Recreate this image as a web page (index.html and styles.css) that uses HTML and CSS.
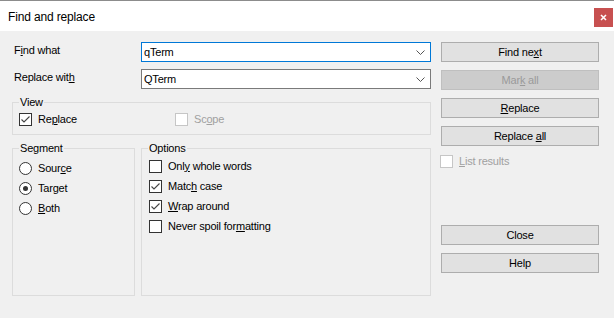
FILE: index.html
```html
<!DOCTYPE html>
<html>
<head>
<meta charset="utf-8">
<link rel="stylesheet" href="styles.css">
</head>
<body>
<div class="window">
  <div class="titlebar">
    <span class="title">Find and replace</span>
    <span class="close-x"><svg width="7" height="7" viewBox="0 0 7 7"><path d="M1 1 L6 6 M6 1 L1 6" stroke="#fff" stroke-width="1.6"/></svg></span>
  </div>
  <div class="main">
    <div class="left">
      <div class="field-row">
        <span class="flabel">F<u>i</u>nd what</span>
        <div class="combo focused"><span class="combo-text">qTerm</span><svg class="chev" width="9" height="5" viewBox="0 0 9 5"><path d="M0.5 0.5 L4.5 4.5 L8.5 0.5" fill="none" stroke="#555" stroke-width="1"/></svg></div>
      </div>
      <div class="field-row">
        <span class="flabel">Replace wit<u>h</u></span>
        <div class="combo"><span class="combo-text">QTerm</span><svg class="chev" width="9" height="5" viewBox="0 0 9 5"><path d="M0.5 0.5 L4.5 4.5 L8.5 0.5" fill="none" stroke="#555" stroke-width="1"/></svg></div>
      </div>
      <fieldset class="group view">
        <legend>View</legend>
        <div class="view-row">
          <span class="check first"><span class="box checked"><svg width="11" height="11" viewBox="0 0 11 11"><path d="M1.5 5.5 L4 8 L9.5 2.5" fill="none" stroke="#444" stroke-width="1.1"/></svg></span><span class="txt">Re<u>p</u>lace</span></span>
          <span class="check disabled"><span class="box"></span><span class="txt">Sc<u>o</u>pe</span></span>
        </div>
      </fieldset>
      <div class="groups">
        <fieldset class="group segment">
          <legend>Segment</legend>
          <div class="row"><span class="radio"></span><span class="txt">Sour<u>c</u>e</span></div>
          <div class="row"><span class="radio on"><span class="dot"></span></span><span class="txt">Tar<u>g</u>et</span></div>
          <div class="row"><span class="radio"></span><span class="txt"><u>B</u>oth</span></div>
        </fieldset>
        <fieldset class="group options">
          <legend>Options</legend>
          <div class="row"><span class="box"></span><span class="txt">Onl<u>y</u> whole words</span></div>
          <div class="row"><span class="box checked"><svg width="11" height="11" viewBox="0 0 11 11"><path d="M1.5 5.5 L4 8 L9.5 2.5" fill="none" stroke="#444" stroke-width="1.1"/></svg></span><span class="txt">Matc<u>h</u> case</span></div>
          <div class="row"><span class="box checked"><svg width="11" height="11" viewBox="0 0 11 11"><path d="M1.5 5.5 L4 8 L9.5 2.5" fill="none" stroke="#444" stroke-width="1.1"/></svg></span><span class="txt"><u>W</u>rap around</span></div>
          <div class="row"><span class="box"></span><span class="txt">Never spoil for<u>m</u>atting</span></div>
        </fieldset>
      </div>
    </div>
    <div class="right">
      <div class="btn"><span class="txt">Find ne<u>x</u>t</span></div>
      <div class="btn disabled"><span class="txt">Mar<u>k</u> all</span></div>
      <div class="btn"><span class="txt"><u>R</u>eplace</span></div>
      <div class="btn"><span class="txt">Replace <u>a</u>ll</span></div>
      <div class="check list disabled"><span class="box"></span><span class="txt"><u>L</u>ist results</span></div>
      <div class="btn close-btn"><span class="txt">Close</span></div>
      <div class="btn"><span class="txt">Help</span></div>
    </div>
  </div>
</div>
</body>
</html>
```

FILE: styles.css
```css
html, body {
  margin: 0;
  padding: 0;
  background: #f0f0f0;
}
body {
  font-family: "Liberation Sans", Arial, sans-serif;
  font-size: 11px;
  letter-spacing: -0.2px;
  color: #000;
  width: 614px;
  height: 318px;
  overflow: hidden;
}
.window {
  border-top: 1px solid #8c8c8c;
}
.titlebar {
  height: 30px;
  background: #fff;
  display: flex;
  align-items: flex-start;
  justify-content: space-between;
}
.title {
  font-size: 12px;
  letter-spacing: -0.15px;
  margin: 9px 0 0 8px;
  line-height: 14px;
}
.close-x {
  width: 19px;
  height: 19px;
  background: #c75050;
  margin: 7px 1px 0 0;
  display: flex;
  align-items: center;
  justify-content: center;
}
.main {
  display: flex;
  padding: 11px 0 0 12px;
}
.left {
  width: 419px;
  display: flex;
  flex-direction: column;
}
.field-row {
  display: grid;
  grid-template-columns: 129px 290px;
  height: 20px;
  margin-bottom: 7px;
}
.flabel {
  padding: 2px 0 0 2px;
  line-height: 13px;
}
.combo {
  box-sizing: border-box;
  height: 20px;
  background: #fff;
  border: 1px solid #7a7a7a;
  display: flex;
  align-items: center;
  justify-content: space-between;
  padding: 1px 5px 0 2px;
}
.combo.focused {
  border-color: #0078d7;
}
.combo-text {
  line-height: 13px;
}
.chev {
  display: block;
}
.txt {
  white-space: pre;
  line-height: 13px;
}
.group {
  margin: 0;
  box-sizing: border-box;
  border: 1px solid #dcdcdc;
  min-width: 0;
}
.group legend {
  padding: 0 1px;
  line-height: 13px;
  margin-left: 0;
}
.view {
  width: 419px;
  padding: 4px 6px 8px 6px;
}
.view-row {
  display: flex;
  height: 13px;
  align-items: center;
}
.check {
  display: flex;
  align-items: center;
  gap: 6px;
  line-height: 13px;
}
.check.first {
  width: 156px;
}
.disabled {
  color: #a0a0a0;
}
.box {
  box-sizing: border-box;
  width: 13px;
  height: 13px;
  border: 1px solid #333;
  background: #fff;
  flex: none;
  display: flex;
  align-items: center;
  justify-content: center;
}
.disabled .box {
  border-color: #c6c6c6;
}
.groups {
  display: flex;
  gap: 6px;
  margin-top: 7px;
}
.segment {
  width: 123px;
  height: 154px;
  padding: 3px 6px 0 6px;
}
.options {
  width: 290px;
  height: 154px;
  padding: 1px 7px 0 7px;
}
.options legend {
  margin-left: -1px;
}
.row {
  height: 20px;
  display: flex;
  align-items: center;
  gap: 6px;
  line-height: 13px;
}
.radio {
  box-sizing: border-box;
  width: 13px;
  height: 13px;
  border: 1px solid #333;
  border-radius: 50%;
  background: #fff;
  flex: none;
  display: flex;
  align-items: center;
  justify-content: center;
}
.dot {
  width: 5px;
  height: 5px;
  border-radius: 50%;
  background: #333;
}
.right {
  width: 158px;
  margin-left: 10px;
  display: flex;
  flex-direction: column;
}
.btn {
  box-sizing: border-box;
  height: 20px;
  background: #e1e1e1;
  border: 1px solid #adadad;
  display: flex;
  align-items: center;
  justify-content: center;
  line-height: 13px;
  margin-bottom: 8px;
}
.btn.disabled {
  background: #cccccc;
  border-color: #bfbfbf;
  color: #9a9a9a;
}
.list {
  margin: 1px 0 0 -1px;
  height: 13px;
}
.close-btn {
  margin-top: 57px;
}
u {
  text-decoration-thickness: 1px;
  text-underline-offset: 1px;
}
```
